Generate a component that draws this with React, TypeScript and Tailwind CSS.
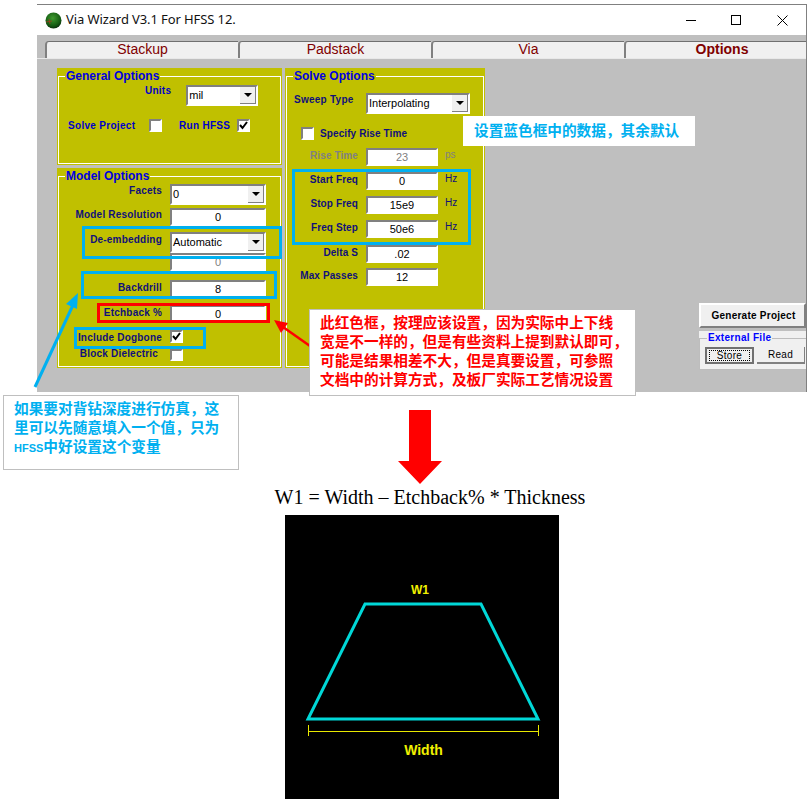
import type { ReactNode } from "react";

const sunken = "border-2 border-t-[#808080] border-l-[#808080] border-r-white border-b-white bg-white";

function Select({ value, width }: { value: string; width: string }) {
  return (
    <div className={`${sunken} ${width} flex h-[21px] items-center justify-between pl-px text-[11px] text-black`}>
      <span>{value}</span>
      <span className="flex h-[17px] w-[16px] items-center justify-center border-r border-b border-[#808080] bg-[#f0f0f0]">
        <span className="h-0 w-0 border-x-[4px] border-t-[4px] border-x-transparent border-t-black" />
      </span>
    </div>
  );
}

function Field({ value, width, disabled }: { value: string; width: string; disabled?: boolean }) {
  return (
    <div className={`${sunken} ${width} flex h-[18px] items-center justify-center text-[11px] ${disabled ? "text-[#808080]" : "text-black"}`}>
      {value}
    </div>
  );
}

function CheckBox({ checked, small }: { checked?: boolean; small?: boolean }) {
  return (
    <div className={`${sunken} w-[13px] ${small ? "h-[12px]" : "h-[13px]"} flex items-center justify-center`}>
      {checked && (
        <svg width="9" height="9" viewBox="0 0 9 9">
          <path d="M1 4 L3.5 7 L8 1" fill="none" stroke="black" strokeWidth="2" />
        </svg>
      )}
    </div>
  );
}

function Panel({ title, height, children }: { title: string; height: string; children: ReactNode }) {
  return (
    <div className={`${height} bg-[#c0c000] px-px pb-px`}>
      <fieldset className="h-full border border-white">
        <legend className="ml-[6px] px-px text-[12px] leading-[16px] font-bold text-[#0000e0]">{title}</legend>
        {children}
      </fieldset>
    </div>
  );
}

function ModelRow({ label, className, labelClass = "mt-[2px]", children }: { label: string; className: string; labelClass?: string; children: ReactNode }) {
  return (
    <div className={`flex items-start ${className}`}>
      <span className={`${labelClass} w-[103px] text-right text-[10px] leading-[12px] font-bold tracking-[0.2px] whitespace-nowrap text-[#10107a]`}>
        {label}
      </span>
      <div className="ml-[8px]">{children}</div>
    </div>
  );
}

function SolveRow({ label, value, unit, className, disabled }: { label: string; value: string; unit?: string; className: string; disabled?: boolean }) {
  return (
    <div className={`flex items-start ${className}`}>
      <span className={`mt-[2px] w-[71px] text-right text-[10px] leading-[12px] font-bold tracking-[0.1px] whitespace-nowrap ${disabled ? "text-[#808080]" : "text-[#10107a]"}`}>
        {label}
      </span>
      <div className="ml-[8px]">
        <Field value={value} width="w-[72px]" disabled={disabled} />
      </div>
      {unit && <span className={`mt-px ml-[7px] text-[10px] leading-[12px] ${disabled ? "text-[#808080]" : "text-[#10107a]"}`}>{unit}</span>}
    </div>
  );
}

function Tab({ label, active, className }: { label: string; active?: boolean; className: string }) {
  return (
    <div
      className={`${className} flex h-[17px] items-center justify-center rounded-tl-[4px] border-t border-l-2 border-t-[#707070] border-l-[#808080] bg-[#f0f0f0] pb-px text-[14px] text-[#800000] ${active ? "pl-[12px] font-bold" : ""}`}
    >
      {label}
    </div>
  );
}

function Frame({ className }: { className: string }) {
  return <div className={`absolute border-[3px] ${className}`} />;
}

const cjk = "[font-family:'Noto_Sans_CJK_SC',sans-serif] text-[14.67px] leading-[19px] font-bold whitespace-nowrap";

export default function App() {
  return (
    <div className="relative h-[804px] w-[812px] overflow-hidden bg-white pt-1 [font-family:'Liberation_Sans',sans-serif]">
      <div className="ml-[37px] w-[770px] border-t border-r border-[#808080]">
        {/* title bar */}
        <div className="flex h-[30px] items-center bg-white pl-2">
          <svg width="17" height="17" viewBox="0 0 17 17">
            <defs>
              <radialGradient id="globe" cx="45%" cy="35%" r="65%">
                <stop offset="0%" stopColor="#3f9a2e" />
                <stop offset="75%" stopColor="#135a12" />
                <stop offset="100%" stopColor="#0a300c" />
              </radialGradient>
            </defs>
            <circle cx="8.5" cy="8.5" r="8" fill="url(#globe)" />
            <path d="M1 10 L7 9 M4 7 L5 12" stroke="#b03020" strokeWidth="0.7" />
          </svg>
          <span className="ml-[4px] [font-family:'Noto_Sans',sans-serif] text-[13px] tracking-[-0.1px] text-[#111]">Via Wizard V3.1 For HFSS 12.</span>
          <div className="ml-auto flex items-center">
            <svg width="11" height="11" viewBox="0 0 11 11">
              <path d="M0 5.5 H10" stroke="black" />
            </svg>
            <svg className="ml-[34px]" width="11" height="11" viewBox="0 0 11 11">
              <rect x="0.5" y="0.5" width="9" height="9" fill="none" stroke="black" />
            </svg>
            <svg className="mr-[18px] ml-[35px]" width="11" height="11" viewBox="0 0 11 11">
              <path d="M0.5 0.5 L10.5 10.5 M10.5 0.5 L0.5 10.5" stroke="black" />
            </svg>
          </div>
        </div>

        {/* client area */}
        <div className="h-[357px] bg-[#bfbfbf] pt-[6px]">
          <div className="flex border-b border-[#e8e8e8] pl-2">
            <Tab label="Stackup" className="w-[193px]" />
            <Tab label="Padstack" className="w-[193px]" />
            <Tab label="Via" className="w-[193px]" />
            <Tab label="Options" active className="flex-1" />
          </div>

          <div className="mt-[9px] flex pl-5">
            <div className="flex w-[225px] flex-col gap-[3px]">
              <Panel title="General Options" height="h-[97px]">
                <div className="mt-px flex items-start pl-[86px]">
                  <span className="text-[10px] leading-[12px] font-bold tracking-[0.25px] text-[#0000c8]">Units</span>
                  <div className="ml-[15px]">
                    <Select value="mil" width="w-[72px]" />
                  </div>
                </div>
                <div className="mt-[12px] flex items-center pl-[9px] text-[10px] font-bold tracking-[0.3px] text-[#0000c8]">
                  <span className="w-[81px]">Solve Project</span>
                  <CheckBox />
                  <span className="ml-[17px] w-[58px]">Run HFSS</span>
                  <CheckBox checked />
                </div>
              </Panel>
              <Panel title="Model Options" height="h-[200px]">
                <ModelRow label="Facets" labelClass="mt-px" className="mt-0">
                  <Select value="0" width="w-[96px]" />
                </ModelRow>
                <ModelRow label="Model Resolution" labelClass="mt-px" className="mt-[3px]">
                  <Field value="0" width="w-[96px]" />
                </ModelRow>
                <ModelRow label="De-embedding" className="mt-[6px]">
                  <Select value="Automatic" width="w-[96px]" />
                </ModelRow>
                <ModelRow label="" className="mt-0">
                  <Field value="0" width="w-[96px]" disabled />
                </ModelRow>
                <ModelRow label="Backdrill" className="mt-[9px]">
                  <Field value="8" width="w-[96px]" />
                </ModelRow>
                <ModelRow label="Etchback %" className="mt-[7px]">
                  <Field value="0" width="w-[96px]" />
                </ModelRow>
                <ModelRow label="Include Dogbone" className="mt-[7px]">
                  <CheckBox checked />
                </ModelRow>
                <ModelRow label="Block Dielectric" labelClass="-mt-px pr-[4px]" className="mt-[5px]">
                  <CheckBox small />
                </ModelRow>
              </Panel>
            </div>

            <div className="ml-[3px] w-[200px]">
              <Panel title="Solve Options" height="h-[300px]">
                <div className="mt-[9px] flex items-start pl-[7px]">
                  <span className="mt-px w-[72px] text-[10px] leading-[12px] font-bold tracking-[0.25px] text-[#10107a]">Sweep Type</span>
                  <Select value="Interpolating" width="w-[104px]" />
                </div>
                <div className="mt-[12px] flex items-center pl-[14px]">
                  <CheckBox />
                  <span className="ml-[6px] text-[10px] font-bold tracking-[0.1px] text-[#10107a]">Specify Rise Time</span>
                </div>
                <SolveRow label="Rise Time" value="23" unit="ps" disabled className="mt-[7px]" />
                <SolveRow label="Start Freq" value="0" unit="Hz" className="mt-[6px]" />
                <SolveRow label="Stop Freq" value="15e9" unit="Hz" className="mt-[6px]" />
                <SolveRow label="Freq Step" value="50e6" unit="Hz" className="mt-[6px]" />
                <SolveRow label="Delta S" value=".02" className="mt-[7px]" />
                <SolveRow label="Max Passes" value="12" className="mt-[5px]" />
              </Panel>
            </div>

            <div className="ml-auto w-[107px] pt-[235px]">
              <div className="flex h-[25px] items-center justify-center border-2 border-t-white border-l-white border-r-[#808080] border-b-[#808080] bg-[#f0f0f0] pl-[2px] text-[10px] font-bold tracking-[0.25px] text-black">
                Generate Project
              </div>
              <div className="mt-[3px] h-[39px] bg-[#f0f0f0] pt-px">
                <fieldset className="h-[38px] border-y border-l border-[#bdbdbd]">
                  <legend className="ml-[7px] px-px text-[10px] leading-[12px] font-bold tracking-[0.3px] text-[#0000ff]">External File</legend>
                  <div className="mt-[3px] flex gap-[3px] pl-[5px]">
                    <div className="flex h-[17px] w-[49px] items-center justify-center border-2 border-[#707070] bg-[#f0f0f0] text-[10px] tracking-[0.3px] text-black">
                      <span className="flex h-[11px] w-[41px] items-center justify-center border border-dotted border-black">Store</span>
                    </div>
                    <div className="flex h-[17px] w-[48px] items-center justify-center border-r border-b-2 border-[#808080] bg-[#f0f0f0] text-[10px] tracking-[0.3px] text-black">
                      Read
                    </div>
                  </div>
                </fieldset>
              </div>
            </div>
          </div>
        </div>
      </div>

      {/* figure under the dialog */}
      <div className="mt-[18px] ml-[274px] flex w-[312px] flex-col">
        <svg className="ml-[124px]" width="44" height="74" viewBox="0 0 44 74">
          <path d="M11 0 H33 V51 H44 L22 74 L0 51 H11 Z" fill="#ff0000" />
        </svg>
        <div className="mt-px text-center [font-family:'Liberation_Serif',serif] text-[20px] leading-[24px] whitespace-nowrap text-black">
          W1 = Width – Etchback% * Thickness
        </div>
        <svg className="mt-[6px] ml-[11px] shrink-0" width="274" height="284" viewBox="0 0 274 284">
          <rect width="274" height="284" fill="black" />
          <path d="M80 89 H196 L253 204 H23 Z" fill="none" stroke="#00d8d8" strokeWidth="3" />
          <path d="M23 216.5 H253 M23.5 210 V221 M253.5 210 V221" fill="none" stroke="#e8e800" strokeWidth="1" />
          <text x="135" y="79" textAnchor="middle" fill="#f0f000" fontSize="12" fontWeight="bold" fontFamily="Liberation Sans">W1</text>
          <text x="138.5" y="240" textAnchor="middle" fill="#f0f000" fontSize="14" fontWeight="bold" fontFamily="Liberation Sans">Width</text>
        </svg>
      </div>

      {/* annotations drawn over the screenshot */}
      <Frame className="top-[226px] left-[82px] h-[33px] w-[200px] border-[#00b0f0]" />
      <Frame className="top-[271px] left-[81px] h-[28px] w-[196px] border-[#00b0f0]" />
      <Frame className="top-[327px] left-[74px] h-[22px] w-[132px] border-[#00b0f0]" />
      <Frame className="top-[169px] left-[292px] h-[76px] w-[179px] border-[#00b0f0]" />
      <Frame className="top-[303px] left-[97px] h-[20px] w-[173px] border-[#ff0000]" />

      <svg className="absolute top-0 left-0" width="812" height="804" viewBox="0 0 812 804">
        <path d="M35 387 L73 305" stroke="#00b0f0" strokeWidth="3" />
        <path d="M78 293 L66 304 L77 309 Z" fill="#00b0f0" />
        <path d="M310 346 L283 327" stroke="#ff0000" strokeWidth="2.5" />
        <path d="M274 320 L288 323 L281 333 Z" fill="#ff0000" />
      </svg>

      <div className={`absolute top-[116px] left-[463px] flex h-[30px] w-[232px] items-center bg-white pb-[3px] pl-[11px] text-[#00b0f0] ${cjk}`}>
        设置蓝色框中的数据，其余默认
      </div>

      <div className={`absolute top-[309px] left-[309px] h-[87px] w-[327px] border border-[#bfbfbf] bg-white pt-[2px] pl-[10px] text-[#ff0000] ${cjk}`}>
        <div>此红色框，按理应该设置，因为实际中上下线</div>
        <div>宽是不一样的，但是有些资料上提到默认即可，</div>
        <div>可能是结果相差不大，但是真要设置，可参照</div>
        <div>文档中的计算方式，及板厂实际工艺情况设置</div>
      </div>

      <div className={`absolute top-[395px] left-[3px] h-[75px] w-[236px] border border-[#bfbfbf] bg-white pt-[2px] pl-[10px] text-[#00b0f0] ${cjk}`}>
        <div>如果要对背钻深度进行仿真，这</div>
        <div>里可以先随意填入一个值，只为</div>
        <div>
          <span className="[font-family:'Liberation_Sans',sans-serif] text-[11px]">HFSS</span>中好设置这个变量
        </div>
      </div>
    </div>
  );
}
